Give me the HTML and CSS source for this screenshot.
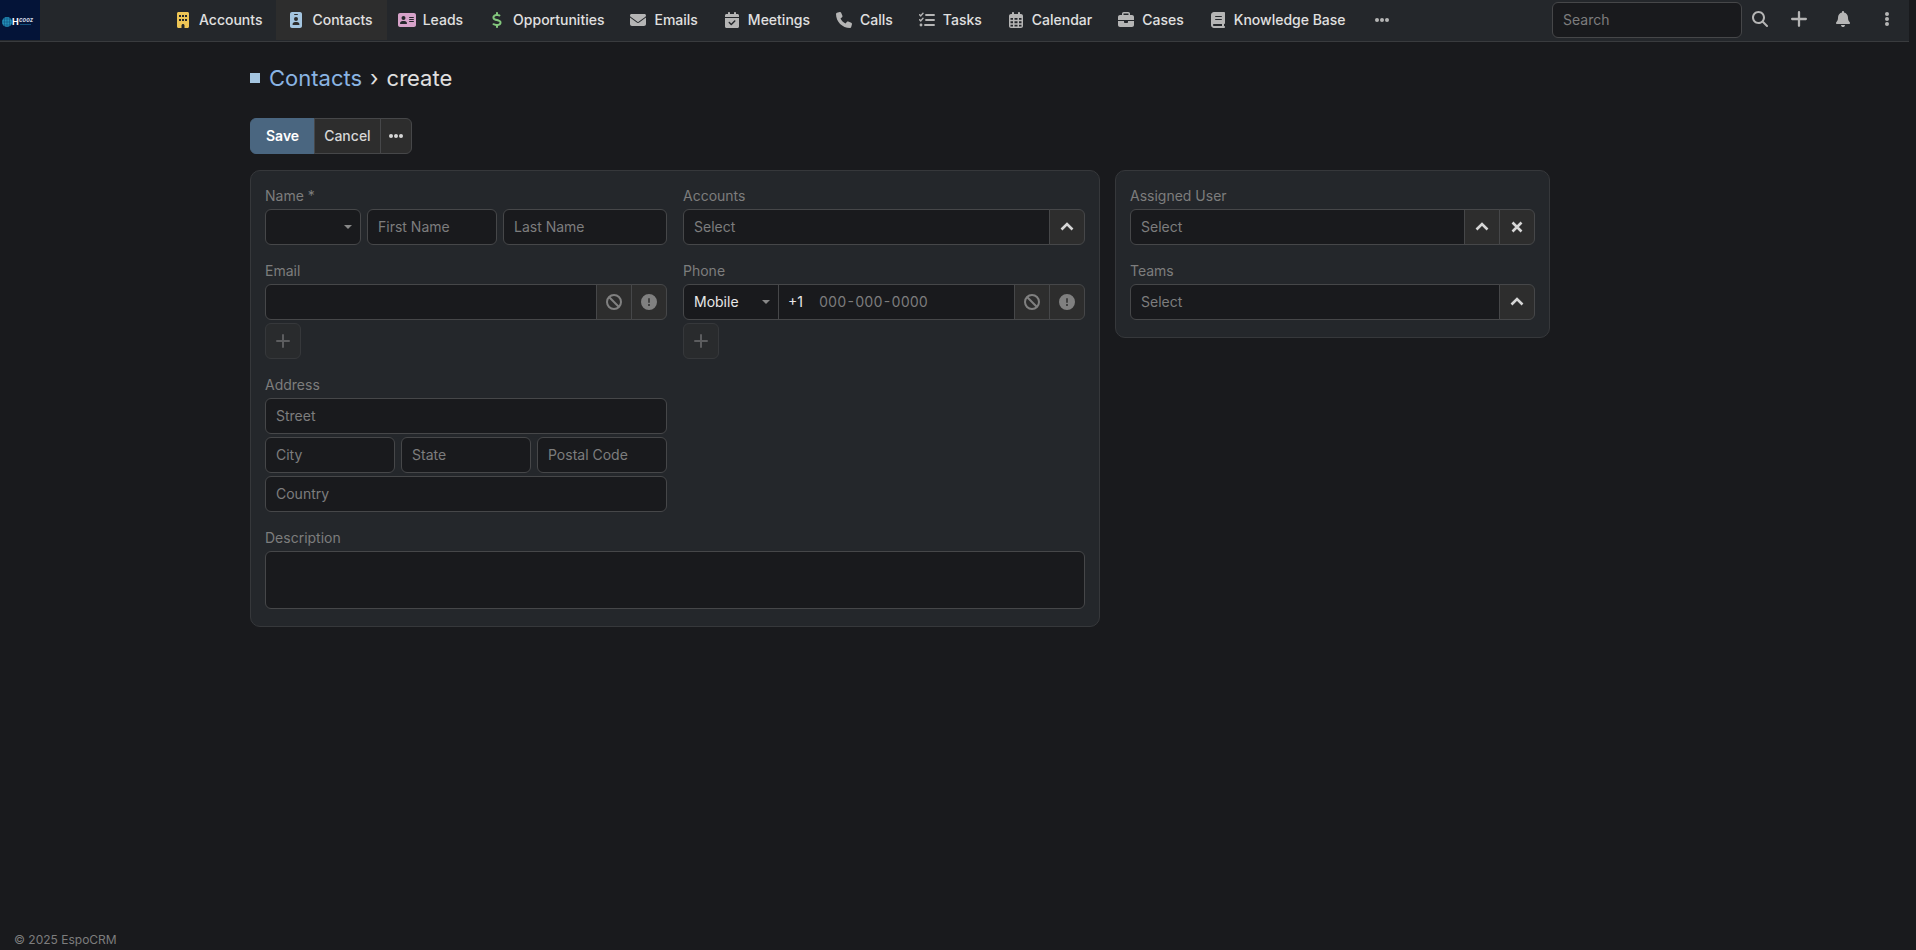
FILE: index.html
```html
<!DOCTYPE html>
<html lang="en">
<head>
    <meta charset="UTF-8">
    <meta name="viewport" content="width=device-width, initial-scale=1.0">
    <title>Contacts › create</title>
    <link rel="stylesheet" href="styles.css">
</head>
<body>
    <svg class="sprite" aria-hidden="true">
        <symbol id="i-ban" viewBox="0 0 512 512"><g fill="none" stroke="currentColor" stroke-width="64"><circle cx="256" cy="256" r="224"/><path d="M98 98l316 316"/></g></symbol>
        <symbol id="i-exclamation" viewBox="0 0 512 512"><path d="M256 512A256 256 0 1 0 256 0a256 256 0 1 0 0 512zm0-384c13.300 0 24 10.700 24 24V264c0 13.300-10.700 24-24 24s-24-10.700-24-24V152c0-13.300 10.700-24 24-24zM224 352a32 32 0 1 1 64 0 32 32 0 1 1 -64 0z"/></symbol>
        <symbol id="i-plus" viewBox="0 0 14 14"><path d="M7 1v12M1 7h12" fill="none" stroke="currentColor" stroke-width="2" stroke-linecap="round"/></symbol>
        <symbol id="i-up" viewBox="0 0 14 14"><path d="M1.500 9.500L7 4l5.500 5.500" fill="none" stroke="currentColor" stroke-width="2.600"/></symbol>
        <symbol id="i-times" viewBox="0 0 14 14"><path d="M2.500 2.500l9 9M11.500 2.500l-9 9" fill="none" stroke="currentColor" stroke-width="2.600"/></symbol>
        <symbol id="i-dots" viewBox="0 0 14 14"><circle cx="2" cy="7" r="2"/><circle cx="7" cy="7" r="2"/><circle cx="12" cy="7" r="2"/></symbol>
    </svg>

    <header class="navbar">
        <a class="logo" href="#" aria-label="Home">
            <svg viewBox="0 0 40 40">
                <circle cx="7" cy="22" r="5" fill="#2390b8"/>
                <path d="M2 22h10M3 19h8M3 25h8M7 17v10M4.500 18v8M9.500 18v8" stroke="#0c4a78" stroke-width=".5"/>
                <text x="12" y="25" font-size="9" font-weight="700" fill="#fff">H</text>
                <text x="19" y="22" font-size="6" font-weight="700" font-style="italic" fill="#cdd5e2">cooz</text>
                <path d="M20 24.500h11" stroke="#14507c" stroke-width="1"/>
            </svg>
        </a>
        <nav class="tabs">
            <a class="tab" href="#"><span class="tab-icon yellow"><svg viewBox="0 0 384 512"><path d="M48 0C21.500 0 0 21.500 0 48V464c0 26.500 21.500 48 48 48h96V432c0-26.500 21.500-48 48-48s48 21.500 48 48v80h96c26.500 0 48-21.500 48-48V48c0-26.500-21.500-48-48-48H48zM64 224h64v64H64zm96 0h64v64h-64zm96 0h64v64h-64zM64 96h64v64H64zm96 0h64v64h-64zm96 0h64v64h-64z" fill-rule="evenodd"/></svg></span>Accounts</a>
            <a class="tab active" href="#"><span class="tab-icon blue"><svg viewBox="0 0 384 512"><path d="M64 0C28.700 0 0 28.700 0 64V448c0 35.300 28.700 64 64 64H320c35.300 0 64-28.700 64-64V64c0-35.300-28.700-64-64-64H64zm96 320h64c44.200 0 80 35.800 80 80c0 8.800-7.200 16-16 16H96c-8.800 0-16-7.200-16-16c0-44.200 35.800-80 80-80zm-32-96a64 64 0 1 1 128 0 64 64 0 1 1 -128 0zM144 64h96c8.800 0 16 7.200 16 16s-7.200 16-16 16H144c-8.800 0-16-7.200-16-16s7.200-16 16-16z" fill-rule="evenodd"/></svg></span>Contacts</a>
            <a class="tab" href="#"><span class="tab-icon pink"><svg viewBox="0 0 576 512"><path d="M64 32C28.700 32 0 60.700 0 96V416c0 35.300 28.700 64 64 64H512c35.300 0 64-28.700 64-64V96c0-35.300-28.700-64-64-64H64zm80 256h64c44.200 0 80 35.800 80 80c0 8.800-7.200 16-16 16H80c-8.800 0-16-7.200-16-16c0-44.200 35.800-80 80-80zm-32-96a64 64 0 1 1 128 0 64 64 0 1 1 -128 0zm256-32H496c8.800 0 16 7.200 16 16s-7.200 16-16 16H368c-8.800 0-16-7.200-16-16s7.200-16 16-16zm0 64H496c8.800 0 16 7.200 16 16s-7.200 16-16 16H368c-8.800 0-16-7.200-16-16s7.200-16 16-16zm0 64H496c8.800 0 16 7.200 16 16s-7.200 16-16 16H368c-8.800 0-16-7.200-16-16s7.200-16 16-16z" fill-rule="evenodd"/></svg></span>Leads</a>
            <a class="tab" href="#"><span class="tab-icon green"><svg viewBox="0 0 320 512"><path d="M160 0c17.700 0 32 14.300 32 32V67.700c1.600 .2 3.100 .4 4.700 .7c.4 .1 .7 .1 1.100 .2l48 8.800c17.400 3.200 28.900 19.900 25.700 37.200s-19.900 28.900-37.200 25.700l-47.500-8.700c-31.300-4.600-58.900-1.500-78.300 6.200s-27.200 18.300-29 28.100c-2 10.700-.5 16.700 1.200 20.400c1.800 3.900 5.500 8.300 12.800 13.200c16.300 10.700 41.300 17.700 73.700 26.300l2.900 .8c28.600 7.600 63.600 16.800 89.600 33.800c14.200 9.300 27.600 21.900 35.900 39.500c8.500 17.900 10.300 37.900 6.400 59.200c-6.900 38-33.100 63.400-65.600 76.700c-13.700 5.600-28.600 9.200-44.400 11V480c0 17.700-14.300 32-32 32s-32-14.300-32-32V445.100c-.4-.1-.9-.1-1.300-.2c-24.400-3.800-64.500-14.300-91.500-26.300c-16.100-7.200-23.400-26.100-16.200-42.200s26.100-23.400 42.200-16.200c20.900 9.300 55.300 18.500 75.200 21.600c31.900 4.700 58.200 2 76-5.300c16.900-6.900 24.600-16.900 26.800-28.900c1.900-10.600 .4-16.700-1.300-20.400c-1.900-4-5.600-8.400-13-13.300c-16.400-10.700-41.500-17.700-74-26.300l-2.800-.7C119.400 279.300 84.400 270 58.400 253c-14.200-9.300-27.500-22-35.800-39.600c-8.400-17.900-10.100-37.900-6.100-59.200C23.700 116 52.300 91.200 84.800 78.300c13.300-5.300 27.900-8.900 43.200-11V32c0-17.700 14.300-32 32-32z"/></svg></span>Opportunities</a>
            <a class="tab" href="#"><span class="tab-icon"><svg viewBox="0 0 512 512"><path d="M48 64C21.500 64 0 85.500 0 112c0 15.100 7.100 29.300 19.200 38.400L236.800 313.600c11.400 8.500 27 8.500 38.400 0L492.800 150.400c12.100-9.100 19.200-23.300 19.200-38.400c0-26.500-21.500-48-48-48H48zM0 176V384c0 35.300 28.700 64 64 64H448c35.300 0 64-28.700 64-64V176L294.400 339.200c-22.800 17.100-54 17.100-76.800 0L0 176z"/></svg></span>Emails</a>
            <a class="tab" href="#"><span class="tab-icon"><svg viewBox="0 0 448 512"><path d="M128 0c17.700 0 32 14.300 32 32V64H288V32c0-17.700 14.300-32 32-32s32 14.300 32 32V64h48c26.500 0 48 21.500 48 48v48H0V112C0 85.500 21.500 64 48 64H96V32c0-17.700 14.300-32 32-32zM0 192H448V464c0 26.500-21.500 48-48 48H48c-26.500 0-48-21.500-48-48V192zM329 305c9.400-9.400 9.400-24.600 0-33.900s-24.600-9.400-33.900 0l-95 95-47-47c-9.400-9.400-24.600-9.400-33.900 0s-9.400 24.600 0 33.900l64 64c9.400 9.400 24.600 9.400 33.900 0L329 305z" fill-rule="evenodd"/></svg></span>Meetings</a>
            <a class="tab" href="#"><span class="tab-icon"><svg viewBox="0 0 512 512"><path d="M164.900 24.600c-7.700-18.600-28-28.500-47.400-23.200l-88 24C12.100 30.200 0 46 0 64C0 311.400 200.600 512 448 512c18 0 33.800-12.100 38.600-29.500l24-88c5.300-19.400-4.600-39.700-23.200-47.400l-96-40c-16.300-6.800-35.200-2.100-46.300 11.600L304.700 368C234.300 334.700 177.300 277.700 144 207.300L193.300 167c13.700-11.200 18.400-30 11.600-46.300l-40-96z"/></svg></span>Calls</a>
            <a class="tab" href="#"><span class="tab-icon"><svg viewBox="0 0 512 512"><path d="M20 88l36 36 72-84M20 248l36 36 72-84" fill="none" stroke="currentColor" stroke-width="46" stroke-linecap="round" stroke-linejoin="round"/><path d="M224 96H480M224 256H480M192 416H480" stroke="currentColor" stroke-width="60" stroke-linecap="round"/><circle cx="64" cy="416" r="46"/></svg></span>Tasks</a>
            <a class="tab" href="#"><span class="tab-icon"><svg viewBox="0 0 448 512"><path d="M128 0c17.700 0 32 14.300 32 32V64H288V32c0-17.700 14.300-32 32-32s32 14.300 32 32V64h32c35.300 0 64 28.700 64 64V448c0 35.300-28.700 64-64 64H64c-35.300 0-64-28.700-64-64V128C0 92.700 28.700 64 64 64H96V32c0-17.700 14.300-32 32-32zM48 192v56h80v-56zm128 0v56h96v-56zm144 0v56h80v-56zM48 296v64h80v-64zm128 0v64h96v-64zm144 0v64h80v-64zM48 408v56h80v-56zm128 0v56h96v-56zm144 0v56h80v-56z" fill-rule="evenodd"/></svg></span>Calendar</a>
            <a class="tab" href="#"><span class="tab-icon"><svg viewBox="0 0 512 512"><path d="M184 48H328c4.400 0 8 3.600 8 8V96H176V56c0-4.400 3.600-8 8-8zm-56 8V96H64C28.700 96 0 124.700 0 160v96H512V160c0-35.300-28.700-64-64-64H384V56c0-30.900-25.100-56-56-56H184c-30.900 0-56 25.100-56 56zM512 288H320v32c0 17.700-14.300 32-32 32H224c-17.700 0-32-14.300-32-32V288H0V416c0 35.300 28.700 64 64 64H448c35.300 0 64-28.700 64-64V288z"/></svg></span>Cases</a>
            <a class="tab" href="#"><span class="tab-icon"><svg viewBox="0 0 448 512"><path d="M96 0C43 0 0 43 0 96V416c0 53 43 96 96 96H416c17.700 0 32-14.300 32-32s-14.300-32-32-32V384c17.700 0 32-14.300 32-32V32c0-17.700-14.300-32-32-32H96zm0 384H352v64H96c-17.700 0-32-14.300-32-32s14.300-32 32-32zm32-240c0-8.800 7.200-16 16-16H336c8.800 0 16 7.200 16 16s-7.200 16-16 16H144c-8.800 0-16-7.200-16-16zm16 80H336c8.800 0 16 7.200 16 16s-7.200 16-16 16H144c-8.800 0-16-7.200-16-16s7.200-16 16-16z" fill-rule="evenodd"/></svg></span>Knowledge Base</a>
            <button class="more" type="button" aria-label="More"><svg class="icon-sm"><use href="#i-dots"/></svg></button>
        </nav>
        <div class="nav-right">
            <input class="field search" type="text" placeholder="Search" aria-label="Search">
            <button class="search-btn" type="button" aria-label="Search"><svg viewBox="0 0 512 512"><path d="M416 208c0 45.900-14.900 88.300-40 122.700L502.600 457.400c12.500 12.500 12.500 32.800 0 45.300s-32.800 12.500-45.300 0L330.700 376c-34.400 25.200-76.800 40-122.700 40C93.100 416 0 322.900 0 208S93.100 0 208 0S416 93.100 416 208zM208 352a144 144 0 1 0 0-288 144 144 0 1 0 0 288z"/></svg></button>
            <button type="button" aria-label="Create"><svg><use href="#i-plus"/></svg></button>
            <button type="button" aria-label="Notifications"><svg viewBox="0 0 448 512"><path d="M224 0c-17.700 0-32 14.300-32 32V51.200C119 66 64 130.600 64 208v18.800c0 47-17.300 92.400-48.500 127.600l-7.400 8.300c-8.400 9.400-10.400 22.900-5.300 34.400S19.400 416 32 416H416c12.600 0 24-7.400 29.200-18.900s3.100-25-5.300-34.400l-7.400-8.300C401.300 319.200 384 273.900 384 226.800V208c0-77.400-55-142-128-156.800V32c0-17.700-14.300-32-32-32zm45.300 493.300c12-12 18.700-28.300 18.700-45.300H160c0 17 6.700 33.300 18.700 45.300s28.300 18.700 45.300 18.700s33.300-6.700 45.300-18.700z"/></svg></button>
            <button type="button" aria-label="Menu"><svg viewBox="0 0 16 16"><circle cx="8" cy="3" r="2"/><circle cx="8" cy="8" r="2"/><circle cx="8" cy="13" r="2"/></svg></button>
        </div>
    </header>

    <main class="content">
        <h1 class="page-title"><span class="color-box"></span><a href="#">Contacts</a><span>›</span><span>create</span></h1>

        <div class="group actions">
            <button class="btn btn-primary" type="button">Save</button>
            <button class="btn" type="button">Cancel</button>
            <button class="btn btn-dots" type="button" aria-label="More actions"><svg class="icon-sm"><use href="#i-dots"/></svg></button>
        </div>

        <form class="record">
            <section class="panel main-panel">
                <div class="cell">
                    <label for="firstName">Name *</label>
                    <div class="row name-row">
                        <select class="field" aria-label="Salutation"><option></option><option>Mr.</option><option>Ms.</option></select>
                        <input class="field" type="text" id="firstName" placeholder="First Name">
                        <input class="field" type="text" placeholder="Last Name" aria-label="Last Name">
                    </div>
                </div>
                <div class="cell">
                    <label for="accounts">Accounts</label>
                    <div class="group">
                        <input class="field" type="text" id="accounts" placeholder="Select">
                        <button class="btn btn-icon" type="button" aria-label="Select account"><svg><use href="#i-up"/></svg></button>
                    </div>
                </div>
                <div class="cell">
                    <label for="email">Email</label>
                    <div class="group">
                        <input class="field" type="email" id="email">
                        <button class="btn btn-icon muted" type="button" aria-label="Opted out"><svg class="icon-lg"><use href="#i-ban"/></svg></button>
                        <button class="btn btn-icon muted" type="button" aria-label="Invalid"><svg class="icon-lg"><use href="#i-exclamation"/></svg></button>
                    </div>
                    <button class="btn btn-icon btn-add" type="button" aria-label="Add email"><svg><use href="#i-plus"/></svg></button>
                </div>
                <div class="cell">
                    <label for="phone">Phone</label>
                    <div class="group">
                        <select class="field phone-type" aria-label="Phone type"><option>Mobile</option><option>Office</option><option>Home</option></select>
                        <div class="field phone">
                            <span>+1</span>
                            <input type="tel" id="phone" placeholder="000-000-0000">
                        </div>
                        <button class="btn btn-icon muted" type="button" aria-label="Opted out"><svg class="icon-lg"><use href="#i-ban"/></svg></button>
                        <button class="btn btn-icon muted" type="button" aria-label="Invalid"><svg class="icon-lg"><use href="#i-exclamation"/></svg></button>
                    </div>
                    <button class="btn btn-icon btn-add" type="button" aria-label="Add phone"><svg><use href="#i-plus"/></svg></button>
                </div>
                <div class="cell address">
                    <label for="street">Address</label>
                    <input class="field" type="text" id="street" placeholder="Street">
                    <div class="row">
                        <input class="field" type="text" placeholder="City" aria-label="City">
                        <input class="field" type="text" placeholder="State" aria-label="State">
                        <input class="field" type="text" placeholder="Postal Code" aria-label="Postal Code">
                    </div>
                    <input class="field" type="text" placeholder="Country" aria-label="Country">
                </div>
                <div class="cell wide">
                    <label for="description">Description</label>
                    <textarea class="field" id="description"></textarea>
                </div>
            </section>

            <section class="panel">
                <div class="cell">
                    <label for="assignedUser">Assigned User</label>
                    <div class="group">
                        <input class="field" type="text" id="assignedUser" placeholder="Select">
                        <button class="btn btn-icon" type="button" aria-label="Select user"><svg><use href="#i-up"/></svg></button>
                        <button class="btn btn-icon" type="button" aria-label="Clear user"><svg><use href="#i-times"/></svg></button>
                    </div>
                </div>
                <div class="cell">
                    <label for="teams">Teams</label>
                    <div class="group">
                        <input class="field" type="text" id="teams" placeholder="Select">
                        <button class="btn btn-icon" type="button" aria-label="Select team"><svg><use href="#i-up"/></svg></button>
                    </div>
                </div>
            </section>
        </form>
    </main>

    <footer class="footer">© 2025 <a href="#">EspoCRM</a></footer>
</body>
</html>
```
FILE: styles.css
```css
* {
    box-sizing: border-box;
}
body {
    margin: 0;
    padding-right: 7px;
    min-height: 100vh;
    display: flex;
    flex-direction: column;
    background-color: #191a1d;
    color: #e0e0e0;
    font-family: Inter, sans-serif;
    font-size: 14px;
    line-height: 20px;
}
a {
    color: inherit;
    text-decoration: none;
}
button, input, select, textarea {
    font: inherit;
    color: inherit;
}
button {
    cursor: pointer;
}
svg {
    display: block;
    fill: currentColor;
}
.sprite {
    display: none;
}

/* Navbar */
.navbar {
    display: flex;
    height: 42px;
    background-color: #24272b;
    border-bottom: 1px solid #393b3e;
}
.logo {
    width: 40px;
    height: 40px;
    background-color: #041438;
}
.tabs {
    display: flex;
    height: 40px;
    margin-left: 123px;
}
.tab {
    display: flex;
    align-items: center;
    gap: 6px;
    padding: 0 14px 0 10px;
    font-weight: 500;
    white-space: nowrap;
}
.tab.active {
    background-color: #2d2d2d;
}
.tab-icon {
    width: 20px;
    color: #b5b5b5;
}
.tab-icon svg {
    height: 16px;
    margin: 0 auto;
}
.tab-icon.yellow {
    color: #edc555;
}
.tab-icon.blue {
    color: #a4c5e0;
}
.tab-icon.pink {
    color: #d6a2c9;
}
.tab-icon.green {
    color: #83c77d;
}
.more, .nav-right button {
    display: flex;
    align-items: center;
    justify-content: center;
    width: 44px;
    padding: 0;
    background: none;
    border: none;
    color: #b5b5b5;
}
.icon-sm {
    width: 14px;
    height: 14px;
}
.nav-right {
    display: flex;
    height: 38px;
    margin-left: auto;
}
.nav-right svg {
    width: 16px;
    height: 16px;
}
.nav-right .search {
    width: 190px;
    margin-top: 2px;
}
.nav-right .search-btn {
    width: 35px;
}

/* Page */
.content {
    width: 1300px;
    max-width: calc(100% - 250px);
    margin-left: 250px;
}
.page-title {
    display: flex;
    align-items: center;
    gap: 8px;
    margin: 22px 0 26px;
    font-size: 22px;
    font-weight: 400;
    line-height: 28px;
}
.page-title a {
    color: #8ab4e3;
}
.color-box {
    width: 10px;
    height: 10px;
    margin-right: 1px;
    background-color: #a4c5e0;
}
.record {
    display: grid;
    grid-template-columns: 850fr 435fr;
    gap: 15px;
    align-items: start;
    margin-top: 16px;
}
.panel {
    display: grid;
    gap: 16px;
    padding: 15px 14px 17px;
    background-color: #24272b;
    border: 1px solid #36383b;
    border-radius: 10px;
}
.main-panel {
    grid-template-columns: 1fr 1fr;
}
.cell {
    display: flex;
    flex-direction: column;
    gap: 3px;
    min-width: 0;
}
.cell.address {
    grid-column: 1;
}
.cell.wide {
    grid-column: 1 / -1;
}
.cell label {
    color: #7d7d7d;
}

/* Fields */
.field {
    width: 100%;
    min-width: 0;
    height: 36px;
    padding: 0 10px 1px;
    background-color: #191a1d;
    border: 1px solid #464749;
    border-radius: 6px;
    outline: none;
}
.cell .field {
    color: #e8e8e8;
}
::placeholder {
    color: #7d7d7d;
    opacity: 1;
}
select.field {
    padding-bottom: 0;
    appearance: none;
    background-image: url("data:image/svg+xml,%3Csvg xmlns='http://www.w3.org/2000/svg' width='8' height='4'%3E%3Cpath d='M0 0h8l-4 4z' fill='%23888'/%3E%3C/svg%3E");
    background-repeat: no-repeat;
    background-position: right 8px center;
}
textarea.field {
    height: 58px;
    padding: 8px 10px;
    resize: none;
}
.row {
    display: grid;
    grid-template-columns: repeat(3, 1fr);
    gap: 6px;
}
.name-row {
    grid-template-columns: 96fr 130fr 164fr;
}
.phone-type {
    flex: 0 0 96px;
}
.phone {
    display: flex;
    align-items: center;
    gap: 16px;
    padding: 0 9px;
}
.phone input {
    flex: 1;
    min-width: 0;
    padding: 0;
    background: none;
    border: none;
    outline: none;
    font-variant-numeric: tabular-nums;
}

/* Buttons */
.btn {
    height: 36px;
    padding: 0 9px;
    background-color: #2d2d2d;
    border: 1px solid #464749;
    border-radius: 6px;
    color: #d6d6d6;
    font-weight: 500;
}
.btn-primary {
    padding: 0 15px;
    background-color: #4a6680;
    border-color: #4a6680;
    color: #fff;
    font-weight: 600;
}
.btn-dots {
    padding: 0 8px;
}
.btn-icon {
    display: flex;
    flex: none;
    align-items: center;
    justify-content: center;
    width: 36px;
    padding: 0;
}
.btn-icon svg {
    width: 14px;
    height: 14px;
}
.btn-icon .icon-lg {
    width: 16px;
    height: 16px;
}
.btn.muted {
    color: #808080;
}
.btn-add {
    border-color: #36383b;
    background-color: #292b2d;
    color: #5c5d5f;
}
.group {
    display: flex;
}
.group > * + * {
    margin-left: -1px;
}
.group > :not(:first-child) {
    border-top-left-radius: 0;
    border-bottom-left-radius: 0;
}
.group > :not(:last-child) {
    border-top-right-radius: 0;
    border-bottom-right-radius: 0;
}

.footer {
    margin-top: auto;
    padding-left: 14px;
    color: #7d7d7d;
    font-size: 12px;
}
```
